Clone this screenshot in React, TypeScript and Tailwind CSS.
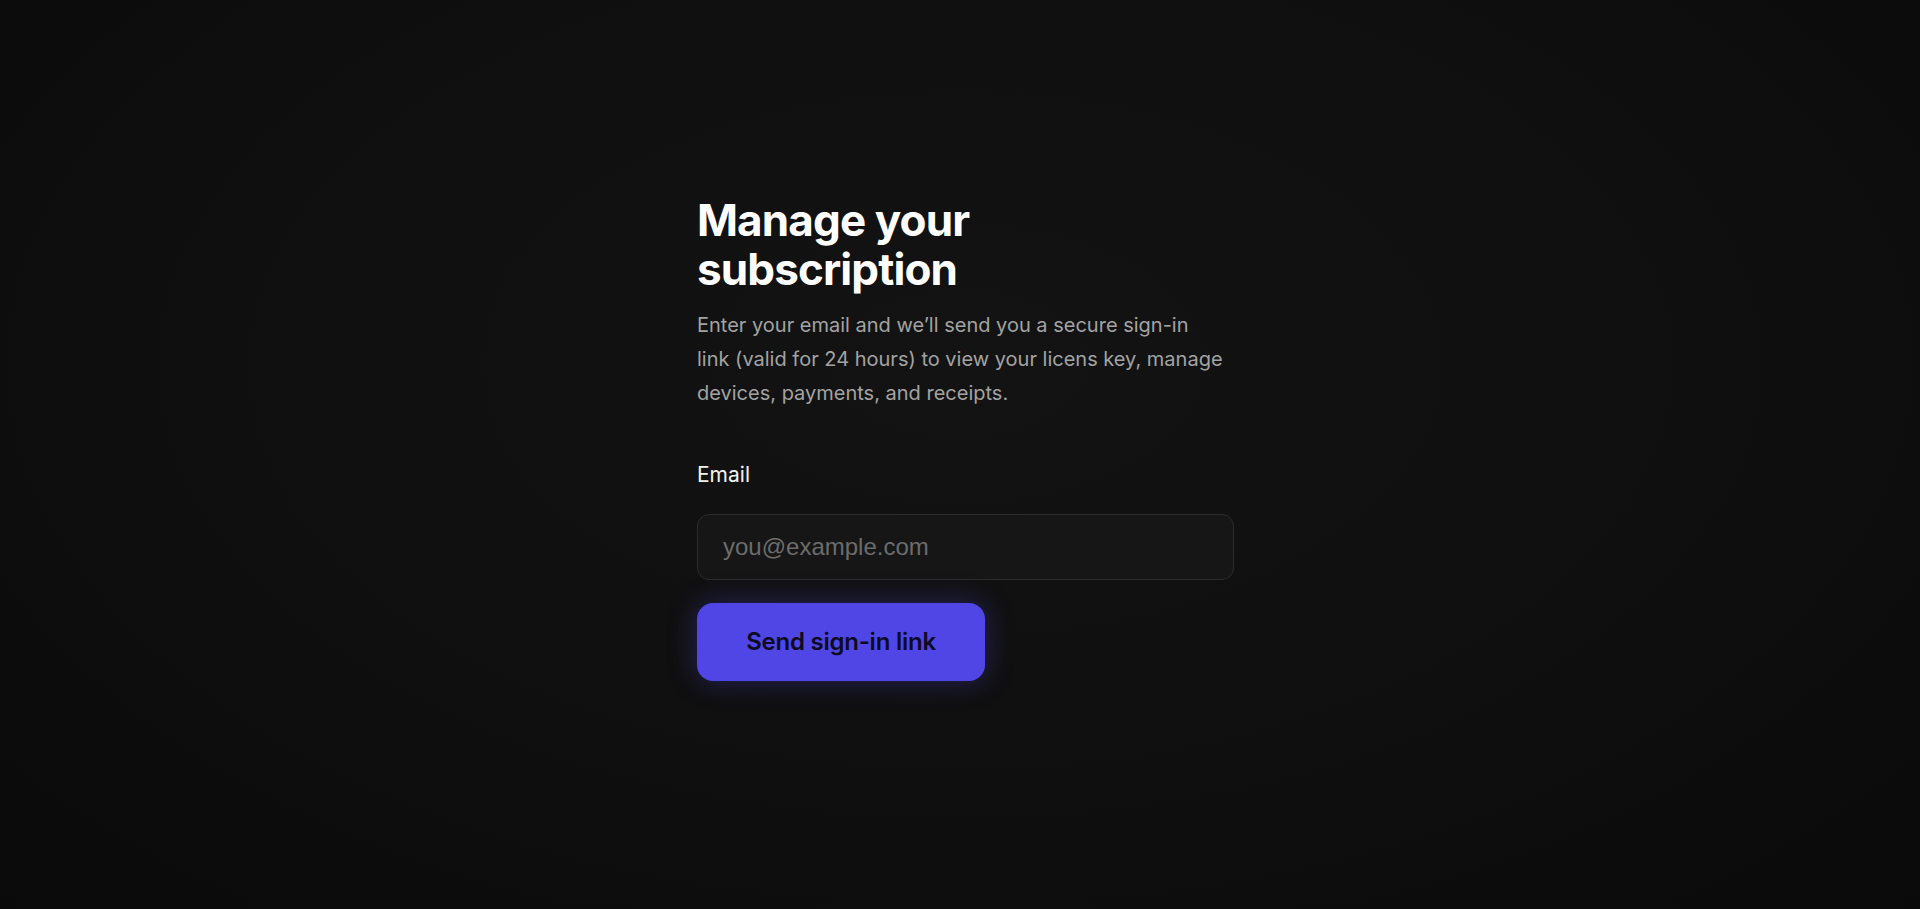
export default function App() {
  return (
    <div className="min-h-[909px] w-full bg-[radial-gradient(ellipse_at_50%_40%,#131313_0%,#0f0f0f_55%,#0a0a0a_100%)] font-['Inter',sans-serif]">
      <div className="ml-[697px] w-[537px] pt-[196px]">
        {/* Heading */}
        <h1 className="text-[44px] font-bold leading-[49px] tracking-[-0.02em] text-white">
          Manage your
          <br />
          subscription
        </h1>
        <p className="mt-[14px] text-[20px] leading-[34px] text-[#a3a3a3]">
          Enter your email and we’ll send you a secure sign-in
          <br />
          link (valid for 24 hours) to view your licens key, manage
          <br />
          devices, payments, and receipts.
        </p>

        {/* Form */}
        <form className="mt-[51px]" onSubmit={(e) => e.preventDefault()}>
          <label htmlFor="email" className="block text-[21px] font-normal leading-[28px] text-[#f2f2f2]">
            Email
          </label>
          <input
            id="email"
            type="email"
            placeholder="you@example.com"
            className="mt-[25px] block h-[66px] w-full rounded-[12px] border border-[#2c2c2c] bg-[#161616] px-[25px] font-['Liberation_Sans',Arial,sans-serif] text-[24px] text-white outline-none placeholder:text-[#6c6c6c]"
          />
          <button
            type="submit"
            className="mt-[23px] flex h-[78px] w-[288px] items-center justify-center rounded-[16px] bg-[#4f46e5] text-[24px] font-semibold tracking-[-0.01em] text-[#0c0b1f] shadow-[0_0_28px_rgba(79,70,229,0.35)]"
          >
            Send sign-in link
          </button>
        </form>
      </div>
    </div>
  );
}
